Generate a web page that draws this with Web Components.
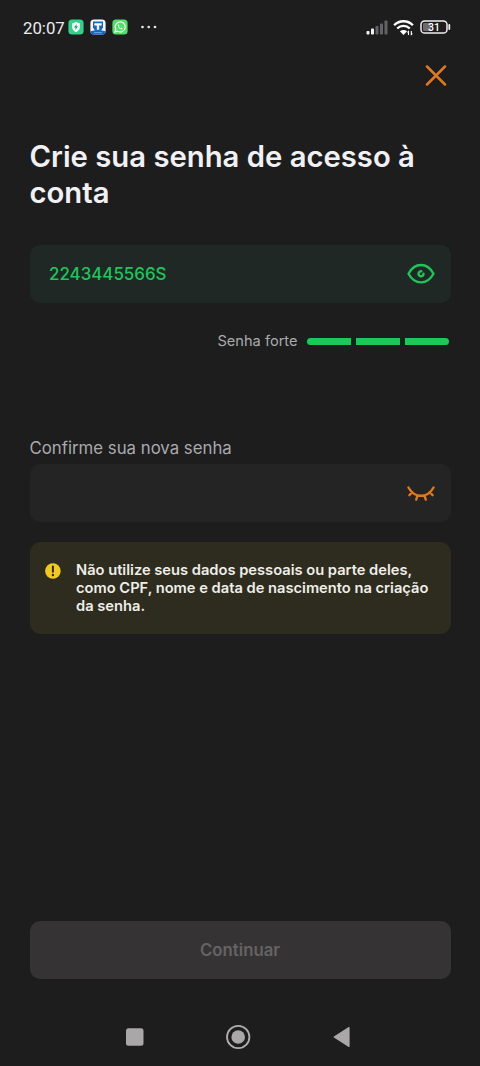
<!DOCTYPE html>
<html lang="pt-BR">
<head>
<meta charset="utf-8">
<title>Crie sua senha</title>
<style>
html,body{margin:0;height:100%;background:#1d1d1e;overflow:hidden}
body{font-family:Inter,"Liberation Sans",sans-serif;color:#f2f2f4}
</style>
</head>
<body>
<password-screen></password-screen>
<script>
const define = (name, html) => customElements.define(name, class extends HTMLElement {
  constructor() {
    super();
    this.attachShadow({mode: 'open'}).innerHTML = html;
  }
});

define('status-bar', `
<style>
:host{display:flex;align-items:center;height:54px;padding:0 29px 0 23px;box-sizing:border-box;color:#ececee}
.time{font:400 16.8px/20px Roboto,sans-serif;width:45px;white-space:nowrap;padding-top:2px}
svg{display:block;flex:none}
.end{margin-left:auto;display:flex;align-items:center}
.bat{display:grid;width:31px;height:14px;margin-left:6px}
.bat>*{grid-area:1/1}
.bat span{font:500 10.5px/15px Roboto,sans-serif;color:#fff;width:28px;text-align:center}
</style>
<span class="time">20:07</span>
<svg width="16" height="16" viewBox="0 0 16 16"><rect x=".4" y=".4" width="15.2" height="15.2" rx="3.6" fill="#2fd18b"/><path d="M8 3l4 1.600v3.100c0 2.600-1.700 4.500-4 5.500-2.300-1-4-2.900-4-5.500V4.600z" fill="#f1fff9"/><path d="M8.700 5L6 8.500h1.700L7.200 11 10 7.500H8.300z" fill="#169c66"/></svg>
<svg width="16" height="16" viewBox="0 0 16 16" style="margin-left:6px"><rect x=".4" y=".4" width="15.2" height="15.2" rx="3.6" fill="#f5f8fc"/><path d="M.4 12.200Q8 10.500 15.600 12.200A3.600 3.600 0 0 1 12 15.600H4A3.600 3.600 0 0 1 .4 12.200z" fill="#1765c8"/><path d="M3 2.600h10v6L10.800 12H5.200L3 8.600z" fill="#1765c8"/><path d="M4.300 4.200h7.400v2.200H9.200v4.400H6.800V6.400H4.300z" fill="#f5f8fc"/><path d="M4 13.700h8" stroke="#91baf0" stroke-width=".8"/></svg>
<svg width="16" height="16" viewBox="0 0 16 16" style="margin-left:6px"><rect x=".4" y=".4" width="15.2" height="15.2" rx="3.6" fill="#52e064"/><path d="M3 13l.8-2.800a5 5 0 1 1 1.900 2z" fill="none" stroke="#fff" stroke-width="1.100"/><path d="M6.200 5.200c-1.200 1.300.2 3.200 1.400 4.200s2.700 1.500 3.300.2l-1.500-1-.8.700c-.8-.4-1.400-1-1.700-1.700l.6-.8z" fill="#fff"/></svg>
<svg width="18" height="4" viewBox="0 0 18 4" style="margin-left:12px"><g fill="#e8e8ea"><circle cx="2.500" cy="2" r="1.350"/><circle cx="8.700" cy="2" r="1.350"/><circle cx="15" cy="2" r="1.350"/></g></svg>
<div class="end">
<svg width="22" height="15" viewBox="0 0 22 15"><g fill="#f2f2f2"><rect x=".5" y="11" width="3" height="3.500" rx=".8"/><rect x="5" y="8.500" width="3" height="6" rx=".8"/></g><g fill="#636365"><rect x="9.500" y="6" width="3" height="8.500" rx=".8"/><rect x="14" y="3.500" width="3" height="11" rx=".8"/><rect x="18.500" y=".5" width="3" height="14" rx=".8"/></g></svg>
<svg width="21" height="17" viewBox="0 0 21 17" style="margin-left:5px"><g fill="none" stroke="#fff" stroke-width="2.300"><path d="M1.100 6.200a13.200 13.200 0 0 1 18.800 0"/><path d="M4.200 9.500a9 9 0 0 1 12.600 0"/></g><path d="M6.900 12.300L10.500 16l3.600-3.700q-3.600-2.800-7.200 0z" fill="#fff"/><path d="M15.500 16v-3.500l-1 1M18.300 12v3.500l1-1" stroke="#fff" fill="none" stroke-width="1.100"/></svg>
<div class="bat"><svg width="31" height="14" viewBox="0 0 31 14"><rect x="3" y="3" width="8" height="8" rx="1" fill="#6b6b6d"/><rect x="1" y="1" width="26" height="12" rx="3.600" fill="none" stroke="#f0f0f0" stroke-width="1.500"/><path d="M29.300 5v4" stroke="#f0f0f0" stroke-width="1.800" stroke-linecap="round"/></svg><span>31</span></div>
</div>`);

define('close-button', `
<style>:host{display:flex;justify-content:flex-end;height:44px;padding:10px 33px 0;box-sizing:border-box}svg{display:block}</style>
<svg width="22" height="22" viewBox="0 0 22 22"><path d="M2 2.500l18 18M20 2.500L2 20.500" stroke="#e2781c" stroke-width="2.500" stroke-linecap="round"/></svg>`);

define('screen-title', `
<style>:host{display:block;height:72px;margin-top:41px;font-size:29.25px;line-height:35.5px;font-weight:600;white-space:nowrap;color:#f1f1f5}</style>
<slot></slot>`);

define('password-field', `
<style>
:host{display:flex;align-items:center;justify-content:space-between;box-sizing:border-box;height:58px;padding:0 14.500px 0 19.500px;border-radius:10px;background:#242424;color:#21c45a;font-size:16.9px;font-weight:500}
:host([valid]){background:#1f2825}
</style>
<span><slot></slot></span><slot name="icon"></slot>`);

define('eye-icon', `
<style>:host{display:block}svg{display:block}</style>
<svg width="30" height="24" viewBox="0 0 30 24"><g fill="none" stroke="#21c45a" stroke-width="2.400" stroke-linecap="round" stroke-linejoin="round"><path d="M2.500 11.700C5.500 6.200 9.800 3 15 3S24.500 6.200 27.500 11.700C24.500 17.200 20.200 20.400 15 20.400S5.500 17.200 2.500 11.700z"/><path d="M15.300 9.300A2.500 2.500 0 1 0 17.500 11.700"/></g></svg>`);

define('eye-closed-icon', `
<style>:host{display:block}svg{display:block}</style>
<svg width="30" height="24" viewBox="0 0 30 24"><path d="M2.400 6.500C5.500 12 9.500 14.800 15 14.800S24.500 12 27.600 6.500M6 11.200l-2.600 3M11.500 14.700L10.200 18.600M18.500 14.700l1.300 3.900M24 11.200l2.600 3" fill="none" stroke="#e2781c" stroke-width="2.400" stroke-linecap="round"/></svg>`);

define('strength-meter', `
<style>
:host{display:flex;align-items:center;justify-content:flex-end;height:20px;margin:28px 2px 0 0;font-size:14.6px;color:#aaaaac}
div{display:flex;gap:5px;margin-left:9px}
i{width:44px;height:7px;background:#19cb56}
i:first-child{border-radius:4px 0 0 4px}i:last-child{border-radius:0 4px 4px 0}
</style>
<slot></slot><div><i></i><i></i><i></i></div>`);

define('field-label', `
<style>:host{display:block;height:24px;line-height:24px;margin-top:85px;margin-bottom:4px;font-size:16.8px;color:#aaaaac}</style>
<slot></slot>`);

define('warning-note', `
<style>
:host{display:flex;box-sizing:border-box;height:92px;margin-top:20px;padding:19px 15px;border-radius:11px;background:#2e2c1f;color:#efeee8;font-size:14.680px;line-height:18px;font-weight:600;white-space:nowrap}
svg{display:block;flex:none;margin:2px 15.500px 0 0}
</style>
<svg width="16" height="16" viewBox="0 0 16 16"><circle cx="7.900" cy="8" r="7.800" fill="#f0ca22"/><path d="M7.900 3.500v5.300" stroke="#2e2c1f" stroke-width="2" stroke-linecap="round"/><circle cx="7.900" cy="12" r="1.200" fill="#2e2c1f"/></svg>
<div><slot></slot></div>`);

define('primary-button', `
<style>:host{display:grid;place-items:center;height:58px;margin-top:auto;border-radius:10px;background:#353334;color:#656364;font-size:16.8px;font-weight:600}</style>
<span><slot></slot></span>`);

define('nav-bar', `
<style>:host{display:flex;align-items:center;height:58px;margin-top:29px;box-sizing:border-box;padding-left:125px}svg{display:block}</style>
<svg width="19" height="18" viewBox="0 0 19 18"><rect x="1" y=".3" width="17.500" height="17.500" rx="2.500" fill="#a9a7a8"/></svg>
<svg width="26" height="26" viewBox="0 0 26 26" style="margin-left:81px"><circle cx="13.200" cy="13" r="11.200" fill="none" stroke="#b0aeaf" stroke-width="1.800"/><circle cx="13.200" cy="13" r="6.800" fill="#a9a7a8"/></svg>
<svg width="18" height="22" viewBox="0 0 18 22" style="margin-left:82px"><path d="M1.200 11L16 1.500v19z" fill="#a9a7a8" stroke="#a9a7a8" stroke-width="1.200" stroke-linejoin="round"/></svg>`);

define('password-screen', `
<style>
:host{display:flex;flex-direction:column;height:1066px;width:480px;background:#1d1d1e}
main{flex:1;display:flex;flex-direction:column;padding:0 29.500px}
.first{margin-top:34px}
</style>
<status-bar></status-bar>
<close-button></close-button>
<main>
<screen-title>Crie sua senha de acesso à<br>conta</screen-title>
<password-field class="first" valid>2243445566S<eye-icon slot="icon"></eye-icon></password-field>
<strength-meter>Senha forte</strength-meter>
<field-label>Confirme sua nova senha</field-label>
<password-field><eye-closed-icon slot="icon"></eye-closed-icon></password-field>
<warning-note>Não utilize seus dados pessoais ou parte deles,<br>como CPF, nome e data de nascimento na criação<br>da senha.</warning-note>
<primary-button>Continuar</primary-button>
</main>
<nav-bar></nav-bar>`);
</script>
</body>
</html>
